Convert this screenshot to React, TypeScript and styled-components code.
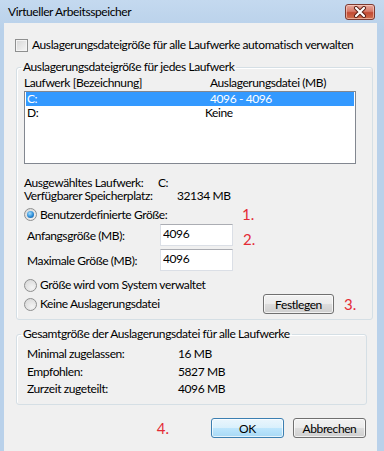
import React from "react";
import styled, { createGlobalStyle } from "styled-components";

const FONT = `Lato, "Noto Sans", sans-serif`;

const GlobalStyle = createGlobalStyle`
  html, body {
    margin: 0;
    padding: 0;
  }
  body {
    background: #b9d1ea;
    font-family: ${FONT};
    font-size: 12px;
    letter-spacing: -0.4px;
    color: #000;
  }
`;

const Window = styled.div`
  width: 384px;
  height: 451px;
  display: flex;
  flex-direction: column;
  background: linear-gradient(#c4d9ef, #b9d1ea 30px);
  overflow: hidden;
`;

const TitleBar = styled.div`
  height: 23px;
  display: flex;
  align-items: flex-start;
  justify-content: space-between;
  padding: 0 9px 0 8px;
`;

const Title = styled.span`
  line-height: 23px;
  font-size: 12px;
  color: #000;
`;

const CloseButton = styled.div`
  margin-top: 4px;
  width: 30px;
  height: 16px;
  box-sizing: border-box;
  border: 1px solid #7d3a31;
  border-radius: 3px;
  background: linear-gradient(#e7a89e 0%, #d77a69 45%, #c24a33 55%, #d0704f 100%);
  box-shadow: inset 0 0 0 1px rgba(255, 220, 210, 0.55);
  display: flex;
  align-items: center;
  justify-content: center;
`;

const Body = styled.div`
  flex: 1;
  margin: 0 7px 0 4px;
  background: #f0f0f0;
  padding: 15px 10px 0 12px;
  display: flex;
  flex-direction: column;
`;

const CheckRow = styled.label`
  display: flex;
  align-items: center;
  gap: 4px;
  height: 14px;
  margin-left: -1px;
  line-height: 14px;
  white-space: nowrap;
`;

const CheckBox = styled.span`
  flex-shrink: 0;
  width: 13px;
  height: 13px;
  box-sizing: border-box;
  border: 1px solid #8e8f8f;
  background: linear-gradient(135deg, #d6d6d6, #f6f6f6);
  box-shadow: inset 0 0 0 1px #f4f4f4;
`;

const Group = styled.fieldset<{ $top: number }>`
  margin: ${({ $top }) => $top}px 0 0;
  padding: 0 16px 0 7px;
  border: 1px solid #d5dfe5;
  border-radius: 3px;
  box-shadow: inset 1px 1px 0 #fff;
`;

const GroupBottom = styled(Group)`
  padding-bottom: 7px;
`;

const Legend = styled.legend`
  padding: 0 2px;
  margin-left: -3px;
  line-height: 16px;
`;

const ColumnRow = styled.div<{ $first: number }>`
  display: grid;
  grid-template-columns: ${({ $first }) => $first}px 1fr;
  line-height: 15px;
  white-space: nowrap;
`;

const ListBox = styled.div`
  margin-top: 1px;
  height: 73px;
  box-sizing: border-box;
  border: 1px solid #828790;
  background: #fff;
  padding: 0 1px;
`;

const ListRow = styled(ColumnRow)<{ $selected?: boolean }>`
  line-height: 14px;
  padding-left: 1px;
  background: ${({ $selected }) => ($selected ? "#3399ff" : "transparent")};
  color: ${({ $selected }) => ($selected ? "#fff" : "#000")};
`;

const InfoRow = styled(ColumnRow)`
  line-height: 13px;
`;

const InfoBlock = styled.div`
  margin-top: 12px;
`;

const RadioRow = styled.div<{ $gap: number }>`
  display: grid;
  grid-template-columns: 218px auto;
  align-items: center;
  margin-top: ${({ $gap }) => $gap}px;
  height: 14px;
`;

const RadioLabel = styled.label`
  display: flex;
  align-items: center;
  gap: 3px;
  white-space: nowrap;
  line-height: 14px;
`;

const Radio = styled.span<{ $checked?: boolean }>`
  flex-shrink: 0;
  width: 13px;
  height: 13px;
  box-sizing: border-box;
  border-radius: 50%;
  border: 1px solid #8e8f8f;
  background: radial-gradient(circle at 65% 70%, #f4f4f4, #d4d4d4);
  display: flex;
  align-items: center;
  justify-content: center;

  &::after {
    content: "";
    display: ${({ $checked }) => ($checked ? "block" : "none")};
    width: 7px;
    height: 7px;
    border-radius: 50%;
    background: radial-gradient(circle at 40% 35%, #a7e0ff, #2a8ad6 55%, #12508e);
  }
`;

const FieldRow = styled.div<{ $gap: number }>`
  display: grid;
  grid-template-columns: 133px 73px auto;
  align-items: center;
  margin-top: ${({ $gap }) => $gap}px;
  padding-left: 3px;
`;

const TextBox = styled.input`
  width: 73px;
  height: 22px;
  box-sizing: border-box;
  border: 1px solid #dbdfe6;
  border-top-color: #abadb3;
  background: #fff;
  font-family: ${FONT};
  font-size: 12px;
  letter-spacing: -0.4px;
  padding: 0 2px 4px;
  margin: 0;
  outline: none;
  color: #000;
`;

const Note = styled.span<{ $left?: number; $drop?: number }>`
  color: #e42b36;
  font-size: 15px;
  line-height: 15px;
  letter-spacing: 0;
  margin-left: ${({ $left }) => $left ?? 0}px;
  position: relative;
  top: ${({ $drop }) => $drop ?? 0}px;
`;

const FooterNote = styled(Note)`
  margin-right: 33px;
`;

const ButtonRow = styled.div`
  display: grid;
  grid-template-columns: 239px 71px auto;
  align-items: center;
  margin-top: 2px;
  margin-bottom: 5px;
  height: 20px;
`;

const Button = styled.button<{ $default?: boolean }>`
  height: 20px;
  box-sizing: border-box;
  border: 1px solid ${({ $default }) => ($default ? "#3c7fb1" : "#707070")};
  border-radius: 3px;
  background: ${({ $default }) =>
    $default
      ? "linear-gradient(#eaf6fd 0%, #d9f0fc 50%, #bee6fd 50%, #a7d9f5 100%)"
      : "linear-gradient(#f2f2f2 0%, #ebebeb 50%, #dddddd 50%, #cfcfcf 100%)"};
  box-shadow: inset 0 0 0 1px rgba(255, 255, 255, 0.7);
  font-family: ${FONT};
  font-size: 12px;
  letter-spacing: -0.4px;
  color: #000;
  padding: 0;
  margin: 0;
`;

const TotalRows = styled.div`
  display: grid;
  row-gap: 1.5px;
  margin-top: 4px;
  padding-left: 3px;
`;

const TotalRow = styled.div`
  display: grid;
  grid-template-columns: 151px auto;
  line-height: 16px;
`;

const Footer = styled.div`
  display: flex;
  align-items: center;
  justify-content: flex-end;
  gap: 9px;
  margin-top: 13px;
  padding-right: 1px;
`;

const DialogButton = styled(Button)`
  width: 73px;
`;

const totals = [
  ["Minimal zugelassen:", "16 MB"],
  ["Empfohlen:", "5827 MB"],
  ["Zurzeit zugeteilt:", "4096 MB"],
];

const CloseIcon = () => (
  <svg width="14" height="12" viewBox="0 0 14 12">
    <path d="M3 2 L11 10 M11 2 L3 10" stroke="#5a1d14" strokeWidth="4" strokeLinecap="round" />
    <path d="M3 2 L11 10 M11 2 L3 10" stroke="#fff" strokeWidth="2.2" strokeLinecap="round" />
  </svg>
);

export default function App() {
  return (
    <>
      <GlobalStyle />
      <Window>
        <TitleBar>
          <Title>Virtueller Arbeitsspeicher</Title>
          <CloseButton>
            <CloseIcon />
          </CloseButton>
        </TitleBar>
        <Body>
          <CheckRow>
            <CheckBox />
            Auslagerungsdateigröße für alle Laufwerke automatisch verwalten
          </CheckRow>

          <Group $top={7}>
            <Legend>Auslagerungsdateigröße für jedes Laufwerk</Legend>
            <ColumnRow $first={186}>
              <span>Laufwerk [Bezeichnung]</span>
              <span>Auslagerungsdatei (MB)</span>
            </ColumnRow>
            <ListBox>
              <ListRow $first={183} $selected>
                <span>C:</span>
                <span>4096 - 4096</span>
              </ListRow>
              <ListRow $first={178}>
                <span>D:</span>
                <span>Keine</span>
              </ListRow>
            </ListBox>

            <InfoBlock>
              <InfoRow $first={134}>
                <span>Ausgewähltes Laufwerk:</span>
                <span>C:</span>
              </InfoRow>
              <InfoRow $first={153}>
                <span>Verfügbarer Speicherplatz:</span>
                <span>32134 MB</span>
              </InfoRow>
            </InfoBlock>

            <RadioRow $gap={5}>
              <RadioLabel>
                <Radio $checked />
                Benutzerdefinierte Größe:
              </RadioLabel>
              <Note>1.</Note>
            </RadioRow>

            <FieldRow $gap={3}>
              <span>Anfangsgröße (MB):</span>
              <TextBox readOnly value="4096" />
              <Note $left={10} $drop={4}>2.</Note>
            </FieldRow>
            <FieldRow $gap={3}>
              <span>Maximale Größe (MB):</span>
              <TextBox readOnly value="4096" />
            </FieldRow>

            <RadioRow $gap={7}>
              <RadioLabel>
                <Radio />
                Größe wird vom System verwaltet
              </RadioLabel>
            </RadioRow>

            <ButtonRow>
              <RadioLabel>
                <Radio />
                Keine Auslagerungsdatei
              </RadioLabel>
              <Button>Festlegen</Button>
              <Note $left={10}>3.</Note>
            </ButtonRow>
          </Group>

          <GroupBottom $top={6}>
            <Legend>Gesamtgröße der Auslagerungsdatei für alle Laufwerke</Legend>
            <TotalRows>
              {totals.map(([label, value]) => (
                <TotalRow key={label}>
                  <span>{label}</span>
                  <span>{value}</span>
                </TotalRow>
              ))}
            </TotalRows>
          </GroupBottom>

          <Footer>
            <FooterNote>4.</FooterNote>
            <DialogButton $default>OK</DialogButton>
            <DialogButton>Abbrechen</DialogButton>
          </Footer>
        </Body>
      </Window>
    </>
  );
}
